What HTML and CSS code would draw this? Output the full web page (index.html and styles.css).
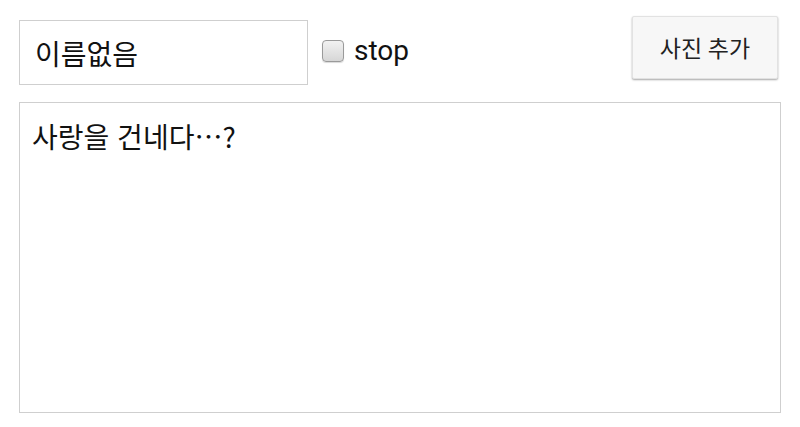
FILE: index.html
```html
<!DOCTYPE html>
<html lang="ko">
<head>
    <meta charset="UTF-8">
    <meta name="viewport" content="width=device-width, initial-scale=1.0">
    <title>사진 추가</title>
    <link rel="stylesheet" href="styles.css">
</head>
<body>
    <div class="page">
        <div class="top-row">
            <input class="name-input" type="text" value="이름없음">
            <label class="stop-label">
                <span class="fake-check"></span>
                <span>stop</span>
            </label>
            <button class="photo-button">사진 추가</button>
        </div>
        <textarea class="message">사랑을 건네다…?</textarea>
    </div>
</body>
</html>
```

FILE: styles.css
```css
body {
    margin: 0;
    background: #fff;
    font-family: Roboto, "Noto Sans CJK KR", sans-serif;
    color: #111;
}

.page {
    padding: 16px 19px 0 19px;
    display: flex;
    flex-direction: column;
}

.top-row {
    display: flex;
    align-items: flex-start;
    padding-right: 3px;
}

.name-input {
    margin-top: 4px;
    width: 289px;
    height: 65px;
    box-sizing: border-box;
    border: 1px solid #cfcfcf;
    padding: 0 15px;
    font-family: Roboto, "Noto Sans CJK KR", sans-serif;
    font-size: 28px;
    color: #111;
    outline: none;
}

.stop-label {
    display: flex;
    align-items: center;
    gap: 10px;
    margin-left: 14px;
    height: 69px;
    font-size: 28px;
}

.fake-check {
    width: 20px;
    height: 20px;
    border: 1px solid #9a9a9a;
    border-radius: 4px;
    background: linear-gradient(#f2f2f2, #d6d6d6);
    box-shadow: 0 1px 1px rgba(0, 0, 0, 0.15);
}

.photo-button {
    margin-left: auto;
    width: 146px;
    height: 63px;
    padding-bottom: 3px;
    background: #f7f7f7;
    border: 1px solid #e2e2e2;
    border-radius: 2px;
    box-shadow: 0 1px 2px rgba(0, 0, 0, 0.35);
    font-family: Roboto, "Noto Sans CJK KR", sans-serif;
    font-size: 23px;
    color: #222;
}

.message {
    margin-top: 17px;
    width: 762px;
    height: 311px;
    box-sizing: border-box;
    border: 1px solid #cfcfcf;
    padding: 13px 12px;
    font-family: "Noto Sans CJK KR", sans-serif;
    font-size: 28px;
    color: #111;
    resize: none;
    outline: none;
}
```
